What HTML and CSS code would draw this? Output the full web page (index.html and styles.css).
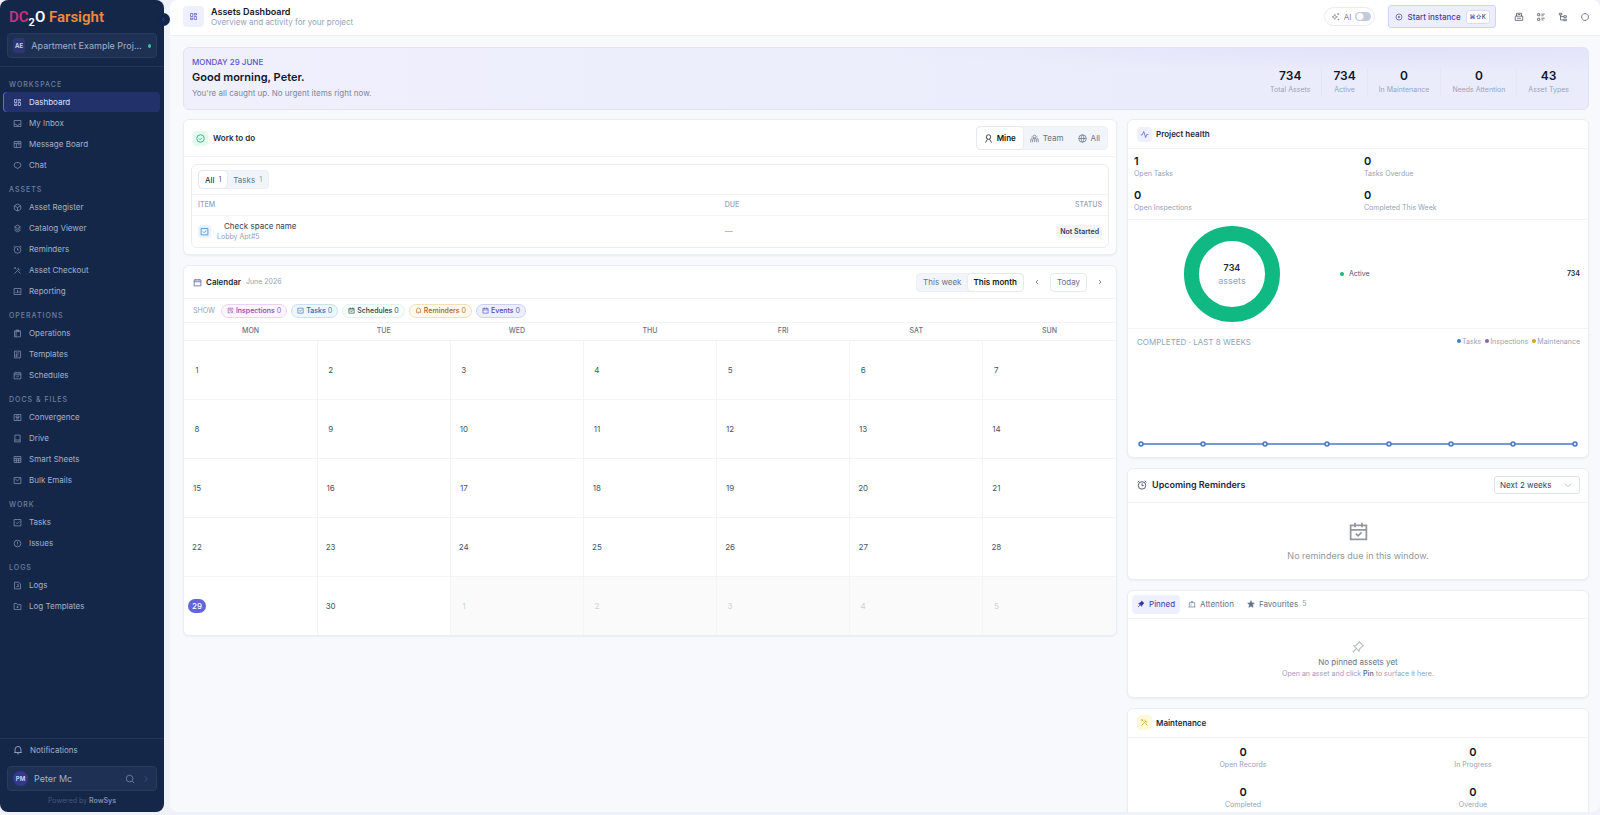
FILE: index.html
```
<!DOCTYPE html>
<html lang="en">
<head>
    <meta charset="UTF-8">
    <title>Assets Dashboard</title>
<link rel="stylesheet" href="styles.css">
</head>
<body>
<svg class="sprite" aria-hidden="true">
    <symbol id="i-dash" viewBox="0 0 24 24"><path d="M4 4h6v8H4zM14 4h6v4h-6zM14 12h6v8h-6zM4 16h6v4H4z"/></symbol>
    <symbol id="i-inbox" viewBox="0 0 24 24"><path d="M3 4h18v16H3zM3 14h5.500a3.500 3.500 0 0 0 7 0H21"/></symbol>
    <symbol id="i-board" viewBox="0 0 24 24"><path d="M3 4h18v16H3zM3 9h18M9 9v11M13 13h5M14 4v5"/></symbol>
    <symbol id="i-chat" viewBox="0 0 24 24"><path d="M10 4h4a7 7 0 0 1 0 14l-2 3-2-3a7 7 0 0 1 0-14z"/></symbol>
    <symbol id="i-box" viewBox="0 0 24 24"><path d="M12 2.500l8.500 4.800v9.400L12 21.500l-8.500-4.800V7.300zM4 7.500l8 4.500 8-4.500M12 12v9"/></symbol>
    <symbol id="i-stack" viewBox="0 0 24 24"><path d="M12 3l8 4.500-8 4.500-8-4.500zM4 12l8 4.500 8-4.500M4 16.500l8 4.500 8-4.500"/></symbol>
    <symbol id="i-alarm" viewBox="0 0 24 24"><circle cx="12" cy="13" r="9"/><path d="M12 8v5.500h4M1.500 5.500l4-3.500M22.500 5.500l-4-3.500"/></symbol>
    <symbol id="i-tools" viewBox="0 0 24 24"><path d="M4 4l5 5M14 14l6 6M4 20L15 9M14 4.500a4 4 0 0 0 5.500 5.500M3 7l4-4"/></symbol>
    <symbol id="i-report" viewBox="0 0 24 24"><path d="M3 4h18v16H3zM8 16v-3M12 16V8M16 16v-5"/></symbol>
    <symbol id="i-clip" viewBox="0 0 24 24"><path d="M4 5h16v16H4zM8 3h8v4H8zM8 7v14"/></symbol>
    <symbol id="i-layout" viewBox="0 0 24 24"><path d="M4 3h16v18H4zM8 8h8M8 12h3v5H8zM15 12h1M15 16h1"/></symbol>
    <symbol id="i-cal" viewBox="0 0 24 24"><path d="M3 5h18v16H3zM3 10h18M8 2v5M16 2v5"/></symbol>
    <symbol id="i-calcheck" viewBox="0 0 24 24"><path d="M3 5h18v16H3zM3 10h18M8 2v5M16 2v5M9 14.500l2.500 2.500 4-4"/></symbol>
    <symbol id="i-article" viewBox="0 0 24 24"><path d="M3 4h18v16H3zM8 8h8v4H8zM8 16h8"/></symbol>
    <symbol id="i-drive" viewBox="0 0 24 24"><path d="M5 3h14v13H5zM5 16l-1 5h16l-1-5M15 19h1"/></symbol>
    <symbol id="i-grid" viewBox="0 0 24 24"><path d="M3 4h18v16H3zM3 9h18M9 9v11M15 9v11M3 14h18"/></symbol>
    <symbol id="i-mail" viewBox="0 0 24 24"><path d="M3 4h18v16H3zM6 8l6 5 7-7"/></symbol>
    <symbol id="i-check" viewBox="0 0 24 24"><path d="M3 4h18v17H3zM8 12l3 3 6-6"/></symbol>
    <symbol id="i-alert" viewBox="0 0 24 24"><circle cx="12" cy="12" r="9"/><path d="M12 7v6M12 15v2"/></symbol>
    <symbol id="i-file" viewBox="0 0 24 24"><path d="M4 3h11l5 5v13H4zM11 9h3v6M9 15h6"/></symbol>
    <symbol id="i-folder" viewBox="0 0 24 24"><path d="M3 4h7l2 3h9v13H3zM12 10v6M9.500 14h5"/></symbol>
    <symbol id="i-bell" viewBox="0 0 24 24"><path d="M5 18v-7.500a7 7 0 0 1 14 0V18M3 18h18M10 21h4"/></symbol>
    <symbol id="i-search" viewBox="0 0 24 24"><circle cx="11" cy="11" r="8"/><path d="M17 17l5 5"/></symbol>
    <symbol id="i-right" viewBox="0 0 24 24"><path d="M9 6l6 6-6 6"/></symbol>
    <symbol id="i-left" viewBox="0 0 24 24"><path d="M15 6l-6 6 6 6"/></symbol>
    <symbol id="i-down" viewBox="0 0 24 24"><path d="M3 8l9 9 9-9"/></symbol>
    <symbol id="i-spark" viewBox="0 0 24 24"><path d="M10 6l2 5 5 2-5 2-2 5-2-5-5-2 5-2zM19 3v5M16.500 5.500h5M20 18v4M18 20h4"/></symbol>
    <symbol id="i-play" viewBox="0 0 24 24"><circle cx="12" cy="12" r="9"/><path d="M10.500 9.500l4 2.500-4 2.500z"/></symbol>
    <symbol id="i-print" viewBox="0 0 24 24"><path d="M6 10V3h12v7M3 10h18v10H3zM7 15h10M9 6h6"/></symbol>
    <symbol id="i-list" viewBox="0 0 24 24"><path d="M4 4h5v5H4zM4 15h5v5H4zM13 5h8M13 9h5M13 15h8M13 19h5"/></symbol>
    <symbol id="i-tree" viewBox="0 0 24 24"><path d="M3 3h6v4H3zM14 9h6v4h-6zM14 17h6v4h-6zM6 7v12h8M6 11h8"/></symbol>
    <symbol id="i-diamond" viewBox="0 0 24 24"><path d="M9 4h6l5 5v6l-5 5H9l-5-5V9z"/></symbol>
    <symbol id="i-done" viewBox="0 0 24 24"><circle cx="12" cy="12" r="10"/><path d="M8 12l3 3 5-5"/></symbol>
    <symbol id="i-user" viewBox="0 0 24 24"><circle cx="12" cy="8" r="6"/><path d="M4 23l5-9M20 23l-5-9"/></symbol>
    <symbol id="i-team" viewBox="0 0 24 24"><circle cx="12" cy="7" r="4"/><path d="M7 22v-6a5 5 0 0 1 10 0v6M12 14v7M2 22v-6a4 4 0 0 1 4-4M22 22v-6a4 4 0 0 0-4-4M5 7v2M19 7v2"/></symbol>
    <symbol id="i-globe" viewBox="0 0 24 24"><circle cx="12" cy="12" r="10"/><path d="M2 12h20M12 2c-5 5-5 15 0 20M12 2c5 5 5 15 0 20"/></symbol>
    <symbol id="i-pulse" viewBox="0 0 24 24"><path d="M2 13h4l4-9 5 16 3-8h4"/></symbol>
    <symbol id="i-pin" viewBox="0 0 24 24"><path d="M14 3l7 7-2 1-4 4-1 4-9-9 4-1 4-4zM9 15l-6 6"/></symbol>
    <symbol id="i-warn" viewBox="0 0 24 24"><path d="M4 21V8h16v13M2 21h20M9 8l3-5 3 5M9 13v4M4 4v1"/></symbol>
    <symbol id="i-star" viewBox="0 0 24 24"><path d="M12 2l3 7 7 .6-5.500 4.700L18.200 22 12 17.800 5.800 22l1.700-7.700L2 9.600 9 9z"/></symbol>
    <symbol id="i-inspect" viewBox="0 0 24 24"><path d="M20 11V4H4v16h7M8 8h8M8 12h4"/><circle cx="16" cy="16" r="3"/><path d="M18.500 18.500L22 22"/></symbol>
</svg>

<aside class="sidebar">
    <div class="logo"><span class="dc">DC</span><sub>2</sub><span class="o">O</span> <span class="far">Farsight</span></div>
    <button class="collapse" aria-label="Collapse menu"><svg class="icon"><use href="#i-left"/></svg></button>
    <button class="side_box project">
        <span class="badge">AE</span>
        <span class="side_name">Apartment Example Proj...</span>
        <span class="online"></span>
    </button>
    <nav>
        <h2>Workspace</h2>
        <a href="#" class="current"><svg class="icon"><use href="#i-dash"/></svg>Dashboard</a>
        <a href="#"><svg class="icon"><use href="#i-inbox"/></svg>My Inbox</a>
        <a href="#"><svg class="icon"><use href="#i-board"/></svg>Message Board</a>
        <a href="#"><svg class="icon"><use href="#i-chat"/></svg>Chat</a>
        <h2>Assets</h2>
        <a href="#"><svg class="icon"><use href="#i-box"/></svg>Asset Register</a>
        <a href="#"><svg class="icon"><use href="#i-stack"/></svg>Catalog Viewer</a>
        <a href="#"><svg class="icon"><use href="#i-alarm"/></svg>Reminders</a>
        <a href="#"><svg class="icon"><use href="#i-tools"/></svg>Asset Checkout</a>
        <a href="#"><svg class="icon"><use href="#i-report"/></svg>Reporting</a>
        <h2>Operations</h2>
        <a href="#"><svg class="icon"><use href="#i-clip"/></svg>Operations</a>
        <a href="#"><svg class="icon"><use href="#i-layout"/></svg>Templates</a>
        <a href="#"><svg class="icon"><use href="#i-calcheck"/></svg>Schedules</a>
        <h2>Docs &amp; Files</h2>
        <a href="#"><svg class="icon"><use href="#i-article"/></svg>Convergence</a>
        <a href="#"><svg class="icon"><use href="#i-drive"/></svg>Drive</a>
        <a href="#"><svg class="icon"><use href="#i-grid"/></svg>Smart Sheets</a>
        <a href="#"><svg class="icon"><use href="#i-mail"/></svg>Bulk Emails</a>
        <h2>Work</h2>
        <a href="#"><svg class="icon"><use href="#i-check"/></svg>Tasks</a>
        <a href="#"><svg class="icon"><use href="#i-alert"/></svg>Issues</a>
        <h2>Logs</h2>
        <a href="#"><svg class="icon"><use href="#i-file"/></svg>Logs</a>
        <a href="#"><svg class="icon"><use href="#i-folder"/></svg>Log Templates</a>
    </nav>
    <div class="side_foot">
        <a href="#"><svg class="icon"><use href="#i-bell"/></svg>Notifications</a>
        <button class="side_box">
            <span class="badge round">PM</span>
            <span class="side_name">Peter Mc</span>
            <svg class="icon"><use href="#i-search"/></svg>
            <svg class="icon faint"><use href="#i-right"/></svg>
        </button>
        <p>Powered by <b>RowSys</b></p>
    </div>
</aside>

<main>
    <header class="topbar">
        <span class="tile big indigo"><svg class="icon"><use href="#i-dash"/></svg></span>
        <div class="title">
            <h1>Assets Dashboard</h1>
            <p>Overview and activity for your project</p>
        </div>
        <label class="ai"><svg class="icon"><use href="#i-spark"/></svg>AI<input type="checkbox"></label>
        <button class="start"><svg class="icon"><use href="#i-play"/></svg>Start instance <kbd>⌘⇧K</kbd></button>
        <div class="tools">
            <button aria-label="Print"><svg class="icon"><use href="#i-print"/></svg></button>
            <button aria-label="List"><svg class="icon"><use href="#i-list"/></svg></button>
            <button aria-label="Tree"><svg class="icon"><use href="#i-tree"/></svg></button>
            <button aria-label="Status"><svg class="icon"><use href="#i-diamond"/></svg></button>
        </div>
    </header>

    <div class="content">
        <section class="hero">
            <div class="greeting">
                <p class="date">MONDAY 29 JUNE</p>
                <h2>Good morning, Peter.</h2>
                <p>You're all caught up. No urgent items right now.</p>
            </div>
            <dl class="stats">
                <div><dd>734</dd><dt>Total Assets</dt></div>
                <div><dd>734</dd><dt>Active</dt></div>
                <div><dd>0</dd><dt>In Maintenance</dt></div>
                <div><dd>0</dd><dt>Needs Attention</dt></div>
                <div><dd>43</dd><dt>Asset Types</dt></div>
            </dl>
        </section>

        <div class="columns">
            <div class="column">
                <section class="card work">
                    <header>
                        <span class="tile green"><svg class="icon"><use href="#i-done"/></svg></span>
                        <h3>Work to do</h3>
                        <div class="segment large">
                            <button class="on"><svg class="icon"><use href="#i-user"/></svg>Mine</button>
                            <button><svg class="icon"><use href="#i-team"/></svg>Team</button>
                            <button><svg class="icon"><use href="#i-globe"/></svg>All</button>
                        </div>
                    </header>
                    <div class="work_box">
                        <div class="work_tabs">
                            <div class="segment small">
                                <button class="on">All <i>1</i></button>
                                <button>Tasks <i>1</i></button>
                            </div>
                        </div>
                        <table class="work_table">
                            <thead><tr><th>ITEM</th><th>DUE</th><th>STATUS</th></tr></thead>
                            <tbody>
                            <tr>
                                <td>
                                    <div class="task">
                                        <span class="tile blue"><svg class="icon"><use href="#i-check"/></svg></span>
                                        <div><strong>Check space name</strong><span>Lobby Apt#5</span></div>
                                    </div>
                                </td>
                                <td>—</td>
                                <td><span class="status">Not Started</span></td>
                            </tr>
                            </tbody>
                        </table>
                    </div>
                </section>

                <section class="card calendar">
                    <header>
                        <svg class="icon cal_icon"><use href="#i-cal"/></svg>
                        <h3>Calendar</h3>
                        <span class="month">June 2026</span>
                        <div class="segment range">
                            <button>This week</button>
                            <button class="on">This month</button>
                        </div>
                        <button class="arrow" aria-label="Previous"><svg class="icon"><use href="#i-left"/></svg></button>
                        <button class="today">Today</button>
                        <button class="arrow" aria-label="Next"><svg class="icon"><use href="#i-right"/></svg></button>
                    </header>
                    <div class="filters">
                        <span>SHOW</span>
                        <button class="pink"><svg class="icon"><use href="#i-inspect"/></svg>Inspections <i>0</i></button>
                        <button class="blue"><svg class="icon"><use href="#i-check"/></svg>Tasks <i>0</i></button>
                        <button class="green"><svg class="icon"><use href="#i-calcheck"/></svg>Schedules <i>0</i></button>
                        <button class="orange"><svg class="icon"><use href="#i-bell"/></svg>Reminders <i>0</i></button>
                        <button class="indigo"><svg class="icon"><use href="#i-cal"/></svg>Events <i>0</i></button>
                    </div>
                    <table class="days">
                        <thead><tr><th>MON</th><th>TUE</th><th>WED</th><th>THU</th><th>FRI</th><th>SAT</th><th>SUN</th></tr></thead>
                        <tbody>
                        <tr><td><span>1</span></td><td><span>2</span></td><td><span>3</span></td><td><span>4</span></td><td><span>5</span></td><td><span>6</span></td><td><span>7</span></td></tr>
                        <tr><td><span>8</span></td><td><span>9</span></td><td><span>10</span></td><td><span>11</span></td><td><span>12</span></td><td><span>13</span></td><td><span>14</span></td></tr>
                        <tr><td><span>15</span></td><td><span>16</span></td><td><span>17</span></td><td><span>18</span></td><td><span>19</span></td><td><span>20</span></td><td><span>21</span></td></tr>
                        <tr><td><span>22</span></td><td><span>23</span></td><td><span>24</span></td><td><span>25</span></td><td><span>26</span></td><td><span>27</span></td><td><span>28</span></td></tr>
                        <tr><td><span class="now">29</span></td><td><span>30</span></td><td class="out"><span>1</span></td><td class="out"><span>2</span></td><td class="out"><span>3</span></td><td class="out"><span>4</span></td><td class="out"><span>5</span></td></tr>
                        </tbody>
                    </table>
                </section>
            </div>

            <div class="column">
                <section class="card health">
                    <header>
                        <span class="tile indigo"><svg class="icon"><use href="#i-pulse"/></svg></span>
                        <h3>Project health</h3>
                    </header>
                    <dl class="counts">
                        <div><dd>1</dd><dt>Open Tasks</dt></div>
                        <div><dd>0</dd><dt>Tasks Overdue</dt></div>
                        <div><dd>0</dd><dt>Open Inspections</dt></div>
                        <div><dd>0</dd><dt>Completed This Week</dt></div>
                    </dl>
                    <div class="assets">
                        <div class="donut"><b>734</b><span>assets</span></div>
                        <div class="share"><i></i>Active<b>734</b></div>
                    </div>
                    <div class="weeks">
                        <h4>COMPLETED · LAST 8 WEEKS</h4>
                        <ul>
                            <li class="c_tasks">Tasks</li>
                            <li class="c_insp">Inspections</li>
                            <li class="c_maint">Maintenance</li>
                        </ul>
                    </div>
                    <svg class="chart" viewBox="0 0 444 107" role="img" aria-label="Completed per week">
                        <path d="M5 94h434"/>
                        <circle cx="5" cy="94" r="2"/><circle cx="67" cy="94" r="2"/><circle cx="129" cy="94" r="2"/><circle cx="191" cy="94" r="2"/>
                        <circle cx="253" cy="94" r="2"/><circle cx="315" cy="94" r="2"/><circle cx="377" cy="94" r="2"/><circle cx="439" cy="94" r="2"/>
                    </svg>
                </section>

                <section class="card reminders">
                    <header>
                        <svg class="icon"><use href="#i-alarm"/></svg>
                        <h3>Upcoming Reminders</h3>
                        <span class="picker">
                            <select aria-label="Reminder window"><option>Next 2 weeks</option></select>
                            <svg class="icon"><use href="#i-down"/></svg>
                        </span>
                    </header>
                    <div class="empty">
                        <svg class="icon"><use href="#i-calcheck"/></svg>
                        <p>No reminders due in this window.</p>
                    </div>
                </section>

                <section class="card pinned">
                    <header>
                        <button class="on"><svg class="icon solid"><use href="#i-pin"/></svg>Pinned</button>
                        <button><svg class="icon"><use href="#i-warn"/></svg>Attention</button>
                        <button><svg class="icon solid"><use href="#i-star"/></svg>Favourites <i>5</i></button>
                    </header>
                    <div class="empty">
                        <svg class="icon"><use href="#i-pin"/></svg>
                        <p>No pinned assets yet</p>
                        <small>Open an asset and click <b>Pin</b> to surface it here.</small>
                    </div>
                </section>

                <section class="card maintenance">
                    <header>
                        <span class="tile yellow"><svg class="icon"><use href="#i-tools"/></svg></span>
                        <h3>Maintenance</h3>
                    </header>
                    <dl>
                        <div><dd>0</dd><dt>Open Records</dt></div>
                        <div><dd>0</dd><dt>In Progress</dt></div>
                        <div><dd>0</dd><dt>Completed</dt></div>
                        <div><dd>0</dd><dt>Overdue</dt></div>
                    </dl>
                </section>
            </div>
        </div>
    </div>
</main>
</body>
</html>
```
FILE: styles.css
```
* {
    box-sizing: border-box;
}
html, body {
    margin: 0;
    padding: 0;
}
body {
    display: flex;
    gap: 6px;
    height: 100vh;
    padding-bottom: 3px;
    overflow: hidden;
    font-family: Inter, "Liberation Sans", sans-serif;
    font-size: 8px;
    line-height: 12px;
    background: #f0f2fa;
    color: #475569;
}
h1, h2, h3, h4, p, dl, dd, ul {
    margin: 0;
    padding: 0;
}
a {
    color: inherit;
    text-decoration: none;
}
button, select, kbd {
    font: inherit;
    color: inherit;
}
button {
    display: inline-flex;
    align-items: center;
    gap: 4px;
    padding: 0;
    border: none;
    background: none;
}
i {
    font-style: normal;
}
.sprite {
    position: absolute;
    width: 0;
    height: 0;
}
.icon {
    flex: none;
    width: 10px;
    height: 10px;
    fill: none;
    stroke: currentColor;
    stroke-width: 2;
}
.icon.solid {
    fill: currentColor;
}

/* sidebar */
.sidebar {
    position: relative;
    display: flex;
    flex-direction: column;
    flex: none;
    width: 164px;
    border-radius: 8px;
    background: #152749;
    color: #a3b0c8;
}
.logo {
    height: 33px;
    padding: 5px 9px 0;
    font: 600 15px/24px Roboto, sans-serif;
    white-space: nowrap;
}
.logo .dc {
    color: #cf2f83;
}
.logo sub {
    font-size: 11px;
    line-height: 0;
    color: #fff;
}
.logo .o {
    color: #fff;
}
.logo .far {
    color: #f08a3c;
}
.collapse {
    position: absolute;
    top: 13px;
    right: -6px;
    justify-content: center;
    width: 13px;
    height: 13px;
    border-radius: 50%;
    background: #12254a;
    color: #47618f;
}
.collapse .icon {
    width: 7px;
    height: 7px;
}
.side_box {
    display: flex;
    gap: 6px;
    height: 25px;
    margin: 0 7px;
    padding: 0 5px;
    border: 1px solid #2a3b5d;
    border-radius: 4px;
    background: #1e3053;
    font-size: 9px;
    text-align: left;
}
.side_name {
    flex: 1;
    white-space: nowrap;
}
.badge {
    width: 15px;
    height: 15px;
    border-radius: 3px;
    background: #2d3672;
    color: #c7d0fb;
    font-size: 6px;
    font-weight: 700;
    line-height: 15px;
    text-align: center;
}
.badge.round {
    border-radius: 50%;
    background: #35388a;
}
.online {
    width: 4px;
    height: 4px;
    border-radius: 50%;
    background: #34c290;
}
.side_box .icon {
    color: #7785a3;
}
.side_box .icon.faint {
    color: #43557a;
}
nav {
    flex: 1;
    margin-top: 8px;
    padding: 12px 4px 0;
    border-top: 1px solid #21335a;
}
nav h2 {
    margin-top: 9px;
    padding-left: 5px;
    font-size: 7px;
    font-weight: 500;
    line-height: 12px;
    letter-spacing: 1px;
    text-transform: uppercase;
    color: #6e7f9f;
}
nav h2:first-child {
    margin-top: 0;
}
nav h2 + a {
    margin-top: 1px;
}
nav a, .side_foot a {
    display: flex;
    align-items: center;
    gap: 7px;
    height: 20px;
    margin-bottom: 1px;
    padding-left: 9px;
    border-radius: 4px;
}
nav .icon {
    width: 9px;
    height: 9px;
    color: #8291ae;
}
nav a.current {
    background: #22316a;
    color: #dde3ff;
    box-shadow: -1px 0 #6366f1;
}
nav a.current .icon {
    color: #c0c8f5;
}
.side_foot {
    padding-top: 1px;
    border-top: 1px solid #21335a;
}
.side_foot a {
    margin: 0 4px 6px;
}
.side_foot .side_box {
    width: 150px;
}
.side_foot p {
    padding: 4px 0 5px;
    font-size: 7px;
    text-align: center;
    color: #42557b;
}
.side_foot b {
    font-weight: 600;
    color: #7c8ba8;
}

/* page frame */
main {
    display: flex;
    flex: 1;
    flex-direction: column;
    min-width: 0;
    overflow: hidden;
    border-radius: 8px;
    background: #f8f9fc;
}
.topbar {
    display: flex;
    align-items: center;
    flex: none;
    height: 36px;
    padding: 0 10px 2px 13px;
    border-bottom: 1px solid #edf0f5;
    background: #fff;
}
.title {
    flex: 1;
    padding-left: 7px;
}
.title h1 {
    font-size: 9px;
    font-weight: 600;
    line-height: 10px;
    color: #0f172a;
}
.title p {
    line-height: 10px;
    color: #94a3b8;
}
.tile {
    display: inline-flex;
    align-items: center;
    justify-content: center;
    flex: none;
    width: 15px;
    height: 15px;
    border-radius: 4px;
}
.tile .icon {
    width: 9px;
    height: 9px;
}
.tile.big {
    width: 21px;
    height: 21px;
}
.tile.indigo {
    background: #eef0ff;
    color: #5b5fc7;
}
.tile.green {
    background: #e3faef;
    color: #10a06c;
}
.tile.blue {
    width: 13px;
    height: 13px;
    background: #eaf3fd;
    color: #3b7fc4;
}
.tile.yellow {
    background: #fef8dc;
    color: #c79a1e;
}
.ai {
    display: flex;
    align-items: center;
    gap: 4px;
    height: 19px;
    padding: 0 3px 0 6px;
    border: 1px solid #e8ebf2;
    border-radius: 10px;
    color: #7c879b;
}
.ai .icon {
    width: 9px;
    height: 9px;
}
.ai input {
    appearance: none;
    width: 16px;
    height: 9px;
    margin: 0;
    border-radius: 5px;
    background: radial-gradient(circle at 5px 50%, #fff 3px, #c3cbd8 4px);
}
.start {
    height: 23px;
    margin: 0 18px 0 13px;
    padding: 0 5px 0 6px;
    border: 1px solid #cfd3f7;
    border-radius: 3px;
    background: #eceefd;
    color: #453fa0;
    font-weight: 500;
}
.start .icon {
    width: 8px;
    height: 8px;
}
.start kbd {
    margin-left: 1px;
    padding: 0 3px;
    border: 1px solid #d9dbf3;
    border-radius: 3px;
    background: #fff;
    font-size: 6px;
}
.tools {
    display: flex;
    gap: 12px;
    color: #59626f;
}
.content {
    flex: 1;
    min-height: 0;
    padding: 11px 11px 0 13px;
}

.hero {
    display: flex;
    align-items: center;
    justify-content: space-between;
    height: 63px;
    margin-bottom: 9px;
    padding: 0 8px;
    border: 1px solid #e0e3f6;
    border-radius: 6px;
    background: radial-gradient(ellipse at 88% 0, #e1e2f9 0, rgba(230, 231, 250, 0) 30%), linear-gradient(90deg, #eff0fc, #eaebfb);
}
.greeting .date {
    color: #5b57cf;
    font-weight: 500;
    line-height: 12px;
}
.greeting h2 {
    font-size: 11px;
    font-weight: 600;
    line-height: 18px;
    color: #0f172a;
}
.greeting p {
    line-height: 15px;
    color: #7b879b;
}
.stats {
    display: flex;
    padding-top: 6px;
}
.stats div {
    padding: 0 11px;
    border-left: 1px solid #e4e6f5;
    text-align: center;
}
.stats div:first-child {
    border: none;
}
.stats dd {
    font-size: 12px;
    font-weight: 600;
    line-height: 16px;
    color: #0f172a;
}
.stats dt {
    font-size: 7px;
    color: #9aa5b8;
}

.columns {
    display: grid;
    grid-template-columns: 1fr calc((100% - 20px) / 3);
    align-items: start;
    gap: 10px;
}
.column {
    display: grid;
    gap: 10px;
    min-width: 0;
}
.card {
    overflow: hidden;
    border: 1px solid #eaedf3;
    border-radius: 6px;
    background: #fff;
    box-shadow: 0 1px 2px rgba(15, 23, 42, 0.05);
}
.card header {
    display: flex;
    align-items: center;
    border-bottom: 1px solid #f1f3f7;
}
.card h3 {
    font-size: 8px;
    font-weight: 600;
    color: #1e293b;
}
.segment {
    display: flex;
    border: 1px solid #edf0f6;
    border-radius: 4px;
    background: #f1f4f9;
    color: #64748b;
}
.segment button {
    border-radius: 4px;
}
.segment .on {
    background: #fff;
    color: #0f172a;
    box-shadow: 0 0 2px rgba(15, 23, 42, 0.12);
}
.segment.large, .segment.range {
    margin-left: auto;
}
.segment.large button {
    height: 22px;
    padding: 0 7px;
}
.segment.large .on {
    font-weight: 600;
}
.segment .icon {
    width: 9px;
    height: 9px;
}
.segment.small button {
    height: 17px;
    padding: 0 6px;
}
.segment i, .filters i, .pinned i {
    font-size: 7px;
    opacity: 0.7;
}

.work header {
    height: 37px;
    padding: 0 8px 0 9px;
}
.work h3 {
    padding-left: 5px;
}
.work_box {
    margin: 7px 7px 6px;
    border: 1px solid #eaedf3;
    border-radius: 6px;
}
.work_tabs {
    display: flex;
    padding: 5px 6px;
    border-bottom: 1px solid #f1f3f7;
}
.work_table {
    width: 100%;
    border-collapse: collapse;
    table-layout: fixed;
}
.work_table th {
    height: 20px;
    padding: 0 6px;
    border-bottom: 1px solid #f1f3f7;
    font-size: 7px;
    font-weight: 500;
    text-align: left;
    color: #94a3b8;
}
.work_table th:nth-child(1) {
    width: 57.5%;
}
.work_table th:last-child, .work_table td:last-child {
    text-align: right;
}
.work_table td {
    height: 32px;
    padding: 0 6px;
    color: #94a3b8;
}
.task {
    display: flex;
    align-items: center;
    gap: 6px;
}
.task strong, .task div span {
    display: block;
    font-size: 7px;
    line-height: 10px;
}
.task strong {
    padding-left: 7px;
    font-size: 8px;
    font-weight: 400;
    line-height: 12px;
    color: #334155;
}
.status {
    padding: 2px 3px;
    border-radius: 3px;
    background: #f1f4f9;
    font-size: 7px;
    font-weight: 600;
    color: #334155;
}

.calendar header {
    height: 33px;
    padding: 0 3px 0 9px;
}
.cal_icon {
    width: 9px;
    height: 9px;
    color: #5b5a94;
}
.calendar h3 {
    padding: 0 5px 0 4px;
}
.month {
    font-size: 7px;
    color: #94a3b8;
}
.segment.range button {
    height: 17px;
    padding: 0 6px;
}
.segment.range .on {
    font-weight: 600;
}
.arrow {
    margin: 0 9px;
}
.arrow .icon {
    width: 8px;
    height: 8px;
}
.today {
    height: 19px;
    padding: 0 6px;
    border: 1px solid #e5e9f0;
    border-radius: 4px;
    color: #64748b;
}
.filters {
    display: flex;
    align-items: center;
    gap: 4px;
    height: 24px;
    padding: 0 9px;
    border-bottom: 1px solid #f1f3f7;
}
.filters > span {
    margin-right: 2px;
    font-size: 7px;
    color: #94a3b8;
}
.filters button {
    gap: 2px;
    height: 14px;
    padding: 0 5px;
    border: 1px solid;
    border-radius: 7px;
    font-size: 7px;
    font-weight: 500;
}
.filters .icon {
    width: 7px;
    height: 7px;
}
.filters .pink {
    border-color: #ecd3f5;
    background: #fcf6fe;
    color: #8b3fa8;
}
.filters .blue {
    border-color: #cbdff5;
    background: #eef6fe;
    color: #2f66a8;
}
.filters .green {
    border-color: #e0f3ec;
    background: #f7fdfa;
    color: #1f3f3a;
}
.filters .orange {
    border-color: #f5dfbd;
    background: #fff8ec;
    color: #a9651d;
}
.filters .indigo {
    border-color: #cdd0f5;
    background: #edeffd;
    color: #4b48b5;
}
.days {
    width: 100%;
    border-collapse: collapse;
    table-layout: fixed;
}
.days th {
    height: 17px;
    padding: 0;
    font-size: 7px;
    font-weight: 500;
    color: #64748b;
}
.days td {
    height: 59px;
    padding: 0 4px;
    border-top: 1px solid #f2f4f7;
    border-left: 1px solid #f2f4f7;
    font-size: 8px;
}
.days td:first-child {
    border-left: none;
}
.days td span {
    display: inline-block;
    min-width: 18px;
    padding: 1px 4px;
    border-radius: 7px;
    text-align: center;
}
.days .now {
    background: #6366d8;
    color: #fff;
    font-weight: 500;
}
.days .out {
    background: #fafafb;
    color: #ccd1da;
}

.health header {
    height: 29px;
    padding: 0 9px;
}
.health h3, .maintenance h3 {
    padding-left: 4px;
}
.counts {
    display: grid;
    grid-template-columns: 1fr 1fr;
    row-gap: 8px;
    padding: 5px 0;
    border-bottom: 1px solid #f1f3f7;
}
.counts div {
    padding: 0 6px;
}
.counts dd, .maintenance dd {
    font-size: 11px;
    font-weight: 600;
    line-height: 14px;
    color: #0f172a;
}
.counts dt, .maintenance dt {
    font-size: 7px;
    color: #94a3b8;
}
.assets {
    display: grid;
    grid-template-columns: 4fr 5fr;
    align-items: center;
    justify-items: center;
    column-gap: 12px;
    padding: 6px 8px;
    border-bottom: 1px solid #f1f3f7;
}
.donut {
    display: flex;
    flex-direction: column;
    align-items: center;
    justify-content: center;
    width: 96px;
    height: 96px;
    border: 15px solid #10b981;
    border-radius: 50%;
    color: #94a3b8;
    font-size: 9px;
    line-height: 13px;
}
.donut b {
    font-weight: 600;
    color: #1e293b;
}
.share {
    display: flex;
    align-items: center;
    width: 100%;
    font-size: 7px;
}
.share i {
    width: 4px;
    height: 4px;
    margin-right: 5px;
    border-radius: 50%;
    background: #10b981;
}
.share b {
    margin-left: auto;
    font-weight: 600;
    color: #1e293b;
}
.weeks {
    display: flex;
    justify-content: space-between;
    padding: 7px 8px 0 9px;
    color: #94a3b8;
}
.weeks h4 {
    font-size: 8px;
    font-weight: 400;
}
.weeks ul {
    display: flex;
    gap: 4px;
    font-size: 7px;
    list-style: none;
}
.weeks li::before {
    content: "";
    display: inline-block;
    width: 4px;
    height: 4px;
    margin-right: 1px;
    border-radius: 50%;
    background: #3b7fc4;
    vertical-align: 1px;
}
.weeks .c_insp::before {
    background: #8b5fc7;
}
.weeks .c_maint::before {
    background: #d9a21b;
}
.chart {
    display: block;
    width: calc(100% - 16px);
    margin: 2px 8px 0;
    fill: #dbe6fa;
    stroke: #4a78c8;
    stroke-width: 1.5;
}

.reminders header {
    height: 34px;
    padding: 0 8px 0 9px;
    color: #334155;
}
.reminders h3 {
    padding-left: 5px;
    font-size: 9px;
}
.picker {
    position: relative;
    margin-left: auto;
}
.picker select {
    appearance: none;
    display: block;
    width: 86px;
    height: 18px;
    padding: 0 5px;
    border: 1px solid #dde1e9;
    border-radius: 3px;
    background: #fff;
}
.picker .icon {
    position: absolute;
    top: 5px;
    right: 8px;
    width: 8px;
    height: 8px;
    color: #94a3b8;
}
.empty {
    display: flex;
    flex-direction: column;
    align-items: center;
    color: #94979f;
}
.reminders .empty {
    padding: 18px 0 17px;
    font-size: 9px;
}
.reminders .empty .icon {
    width: 21px;
    height: 21px;
    margin-bottom: 7px;
}
.reminders .empty p {
    line-height: 13px;
}

.pinned header {
    gap: 3px;
    height: 28px;
    padding: 0 4px;
    color: #64748b;
}
.pinned button {
    height: 19px;
    padding: 0 5px;
    border-radius: 4px;
}
.pinned header .icon {
    width: 8px;
    height: 8px;
}
.pinned .on {
    background: #eef0fe;
    color: #3b35a5;
}
.pinned .empty {
    padding: 21px 0 17px;
    color: #64748b;
}
.pinned .empty .icon {
    width: 14px;
    height: 14px;
    margin-bottom: 2px;
    color: #b9c0cc;
}
.pinned small {
    font-size: 7px;
    color: #94a3b8;
}
.pinned small b {
    font-weight: 600;
    color: #64748b;
}

.maintenance header {
    height: 29px;
    padding: 0 9px;
}
.maintenance dl {
    display: grid;
    grid-template-columns: 1fr 1fr;
    row-gap: 14px;
    padding: 7px 0 12px;
    text-align: center;
}
```
